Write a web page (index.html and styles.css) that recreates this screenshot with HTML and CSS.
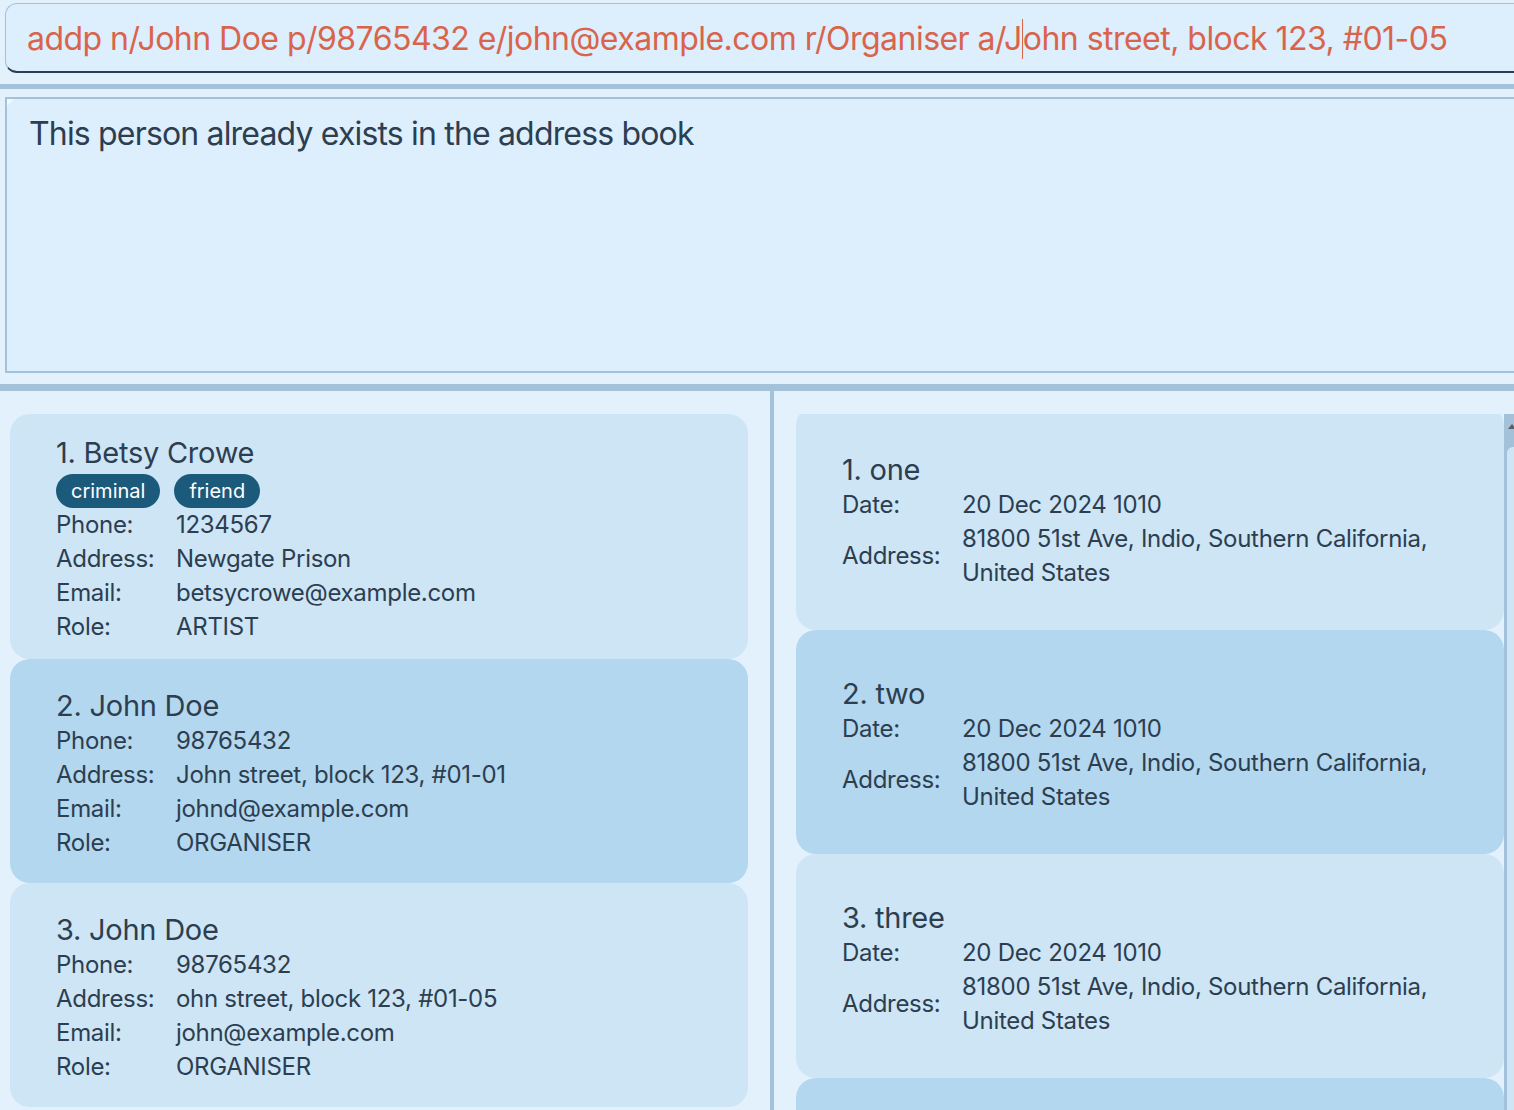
FILE: index.html
```html
<!DOCTYPE html>
<html>
<head>
<meta charset="utf-8">
<link rel="stylesheet" href="styles.css">
</head>
<body>
<div class="app">
  <div class="cmd">addp n/John Doe p/98765432 e/john@example.com r/Organiser a/J<span class="caret"></span>ohn street, block 123, #01-05</div>
  <div class="sep sep-thin"></div>
  <div class="result"><span class="corner"></span>This person already exists in the address book</div>
  <div class="sep sep-thick"></div>
  <div class="lists">
    <div class="left-list">
      <div class="card">
        <div class="title">1. Betsy Crowe</div>
        <div class="tags"><span class="tag">criminal</span><span class="tag">friend</span></div>
        <div class="fields">
          <span>Phone:</span><span>1234567</span>
          <span>Address:</span><span>Newgate Prison</span>
          <span>Email:</span><span>betsycrowe@example.com</span>
          <span>Role:</span><span>ARTIST</span>
        </div>
      </div>
      <div class="card selected">
        <div class="title">2. John Doe</div>
        <div class="fields">
          <span>Phone:</span><span>98765432</span>
          <span>Address:</span><span>John street, block 123, #01-01</span>
          <span>Email:</span><span>johnd@example.com</span>
          <span>Role:</span><span>ORGANISER</span>
        </div>
      </div>
      <div class="card">
        <div class="title">3. John Doe</div>
        <div class="fields">
          <span>Phone:</span><span>98765432</span>
          <span>Address:</span><span>ohn street, block 123, #01-05</span>
          <span>Email:</span><span>john@example.com</span>
          <span>Role:</span><span>ORGANISER</span>
        </div>
      </div>
    </div>
    <div class="divider"></div>
    <div class="right-pane">
      <div class="right-view">
        <div class="right-inner">
          <div class="card ev">
            <div class="title">1. one</div>
            <div class="fields">
              <span>Date:</span><span>20 Dec 2024 1010</span>
              <span class="mid">Address:</span><span>81800 51st Ave, Indio, Southern California,<br>United States</span>
            </div>
          </div>
          <div class="card ev alt">
            <div class="title">2. two</div>
            <div class="fields">
              <span>Date:</span><span>20 Dec 2024 1010</span>
              <span class="mid">Address:</span><span>81800 51st Ave, Indio, Southern California,<br>United States</span>
            </div>
          </div>
          <div class="card ev">
            <div class="title">3. three</div>
            <div class="fields">
              <span>Date:</span><span>20 Dec 2024 1010</span>
              <span class="mid">Address:</span><span>81800 51st Ave, Indio, Southern California,<br>United States</span>
            </div>
          </div>
          <div class="card ev alt"></div>
        </div>
      </div>
      <div class="scrollbar"><span class="arrow"></span><span class="thumb"></span></div>
    </div>
  </div>
</div>
</body>
</html>
```
FILE: styles.css
```css
html, body {
  margin: 0;
  padding: 0;
  height: 100%;
  overflow: hidden;
  background: #e3f1fd;
}
body {
  font-family: Inter, "Noto Sans", sans-serif;
  color: #2c3e50;
}
.app {
  width: 1540px;
  height: 1110px;
  display: flex;
  flex-direction: column;
  overflow: hidden;
}
.cmd {
  margin: 3px 0 0 5px;
  height: 67px;
  box-sizing: content-box;
  border-top: 1px solid #a3c1d9;
  border-left: 1px solid #a3c1d9;
  border-bottom: 2px solid #2c3e50;
  border-radius: 12px 0 0 12px;
  background: #ddeefd;
  color: #d9644c;
  font-size: 32px;
  line-height: 69px;
  padding-left: 21px;
  white-space: nowrap;
  letter-spacing: -0.53px;
  flex: none;
}
.caret {
  display: inline-block;
  width: 0;
  height: 40px;
  border-left: 1px solid #d9644c;
  vertical-align: -9px;
}
.sep {
  background: #a3c1d9;
  flex: none;
}
.sep-thin {
  margin-top: 11px;
  height: 5px;
}
.result {
  position: relative;
  margin: 8px 0 0 5px;
  border: 2px solid #a3c1d9;
  border-right: none;
  background: #ddeefd;
  font-size: 32px;
  line-height: 38px;
  padding: 16px 22px 0;
  letter-spacing: -0.83px;
  box-sizing: border-box;
  height: 276px;
  flex: none;
}
.corner {
  position: absolute;
  left: 0;
  top: 0;
  width: 0;
  height: 0;
  border-top: 7px solid #f4f9fe;
  border-right: 7px solid transparent;
}
.sep-thick {
  margin-top: 11px;
  height: 7px;
}
.lists {
  flex: 1;
  display: flex;
  min-height: 0;
  overflow: hidden;
}
.left-list {
  width: 770px;
  box-sizing: border-box;
  padding: 23px 22px 0 10px;
  flex: none;
}
.divider {
  width: 4px;
  background: #a3c1d9;
  flex: none;
}
.right-pane {
  width: 740px;
  flex: none;
  padding: 23px 0 0 22px;
  box-sizing: border-box;
  display: flex;
}
.right-view {
  width: 708px;
  overflow: hidden;
  flex: none;
}
.right-inner {
  margin-top: -8px;
}
.card {
  background: #cde5f5;
  border-radius: 20px;
  min-height: 224px;
  box-sizing: border-box;
  padding: 21px 20px 15px 46px;
  display: flex;
  flex-direction: column;
  justify-content: center;
}
.card.selected, .card.alt {
  background: #b3d7ee;
}
.title {
  font-size: 29px;
  line-height: 36px;
  letter-spacing: -0.25px;
}
.tags {
  display: flex;
  gap: 14px;
  margin-top: 3px;
}
.tag {
  background: #1c5a7c;
  color: #ffffff;
  font-size: 20px;
  line-height: 34px;
  height: 34px;
  padding: 0 15px;
  border-radius: 17px;
}
.fields {
  display: grid;
  grid-template-columns: 120px 1fr;
  font-size: 24px;
  line-height: 34px;
  letter-spacing: -0.3px;
}
.fields .mid {
  align-self: center;
}
.scrollbar {
  position: relative;
  width: 10px;
  background: #a3c1d9;
  flex: none;
}
.arrow {
  position: absolute;
  left: 4px;
  top: 10px;
  width: 0;
  height: 0;
  border-left: 4px solid transparent;
  border-right: 4px solid transparent;
  border-bottom: 5px solid #555f68;
}
.thumb {
  position: absolute;
  left: 3px;
  right: 0;
  top: 33px;
  height: 900px;
  background: #cde5f5;
  border-radius: 6px 0 0 6px;
}
```
